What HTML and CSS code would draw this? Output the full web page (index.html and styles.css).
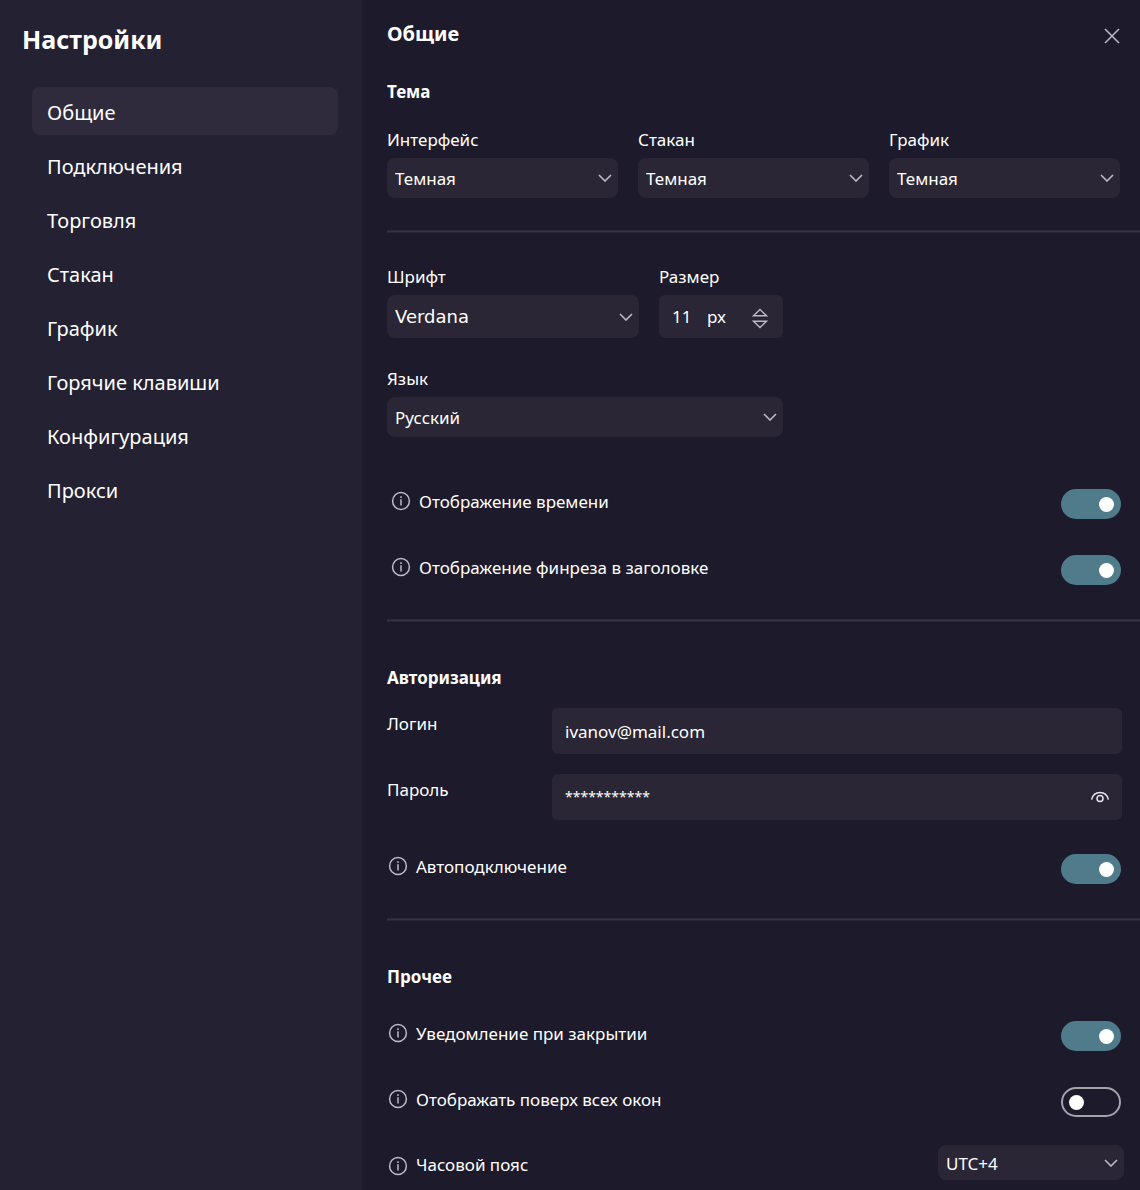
FILE: index.html
```html
<!DOCTYPE html>
<html lang="ru">
<head>
<meta charset="utf-8">
<meta name="viewport" content="width=device-width, initial-scale=1">
<title>Настройки</title>
<link rel="stylesheet" href="styles.css">
</head>
<body>
<svg class="sprite" aria-hidden="true">
  <symbol id="chevron" viewBox="0 0 14 8"><path d="M1 1l6 6 6-6"/></symbol>
  <symbol id="info" viewBox="0 0 20 20"><circle cx="10" cy="10" r="8.4"/><path d="M10 8.300v6.200M10 5.200v1.700"/></symbol>
</svg>
<div class="settings">
  <aside class="sidebar">
    <h1 class="sidebar-title">Настройки</h1>
    <nav class="nav">
      <a class="nav-link active" href="#general" aria-current="page">Общие</a>
      <a class="nav-link" href="#connections">Подключения</a>
      <a class="nav-link" href="#trading">Торговля</a>
      <a class="nav-link" href="#book">Стакан</a>
      <a class="nav-link" href="#chart">График</a>
      <a class="nav-link" href="#hotkeys">Горячие клавиши</a>
      <a class="nav-link" href="#config">Конфигурация</a>
      <a class="nav-link" href="#proxy">Прокси</a>
    </nav>
  </aside>

  <main class="content" id="general">
    <header class="header">
      <h2 class="title">Общие</h2>
      <button class="close" type="button" aria-label="Закрыть"><svg viewBox="0 0 16 16"><path d="M1 1l14 14M15 1L1 15"/></svg></button>
    </header>

    <section class="section theme">
      <h3 class="heading">Тема</h3>
      <div class="theme-grid">
        <div class="field">
          <label for="theme-ui">Интерфейс</label>
          <div class="select"><select id="theme-ui"><option>Темная</option></select><svg class="chevron"><use href="#chevron"/></svg></div>
        </div>
        <div class="field">
          <label for="theme-book">Стакан</label>
          <div class="select"><select id="theme-book"><option>Темная</option></select><svg class="chevron"><use href="#chevron"/></svg></div>
        </div>
        <div class="field">
          <label for="theme-chart">График</label>
          <div class="select"><select id="theme-chart"><option>Темная</option></select><svg class="chevron"><use href="#chevron"/></svg></div>
        </div>
      </div>
    </section>

    <section class="section display">
      <div class="fonts">
        <div class="font-row">
          <div class="field font-field">
            <label for="font">Шрифт</label>
            <div class="select tall"><select class="verdana" id="font"><option>Verdana</option></select><svg class="chevron"><use href="#chevron"/></svg></div>
          </div>
          <div class="field size-field">
            <label for="size">Размер</label>
            <div class="stepper">
              <input id="size" type="text" inputmode="numeric" value="11">
              <span class="unit">px</span>
              <span class="steps">
                <button type="button" aria-label="Увеличить"><svg viewBox="0 0 16 9"><path d="M1.500 7.800h13L8 1.500z"/></svg></button>
                <button type="button" aria-label="Уменьшить"><svg viewBox="0 0 16 9"><path d="M1.500 1.200h13L8 7.500z"/></svg></button>
              </span>
            </div>
          </div>
        </div>
        <div class="field">
          <label for="lang">Язык</label>
          <div class="select"><select id="lang"><option>Русский</option></select><svg class="chevron"><use href="#chevron"/></svg></div>
        </div>
      </div>
      <div class="rows inset">
        <div class="row">
          <svg class="info"><use href="#info"/></svg>
          <label for="show-time">Отображение времени</label>
          <input class="toggle" id="show-time" type="checkbox" checked>
        </div>
        <div class="row">
          <svg class="info"><use href="#info"/></svg>
          <label for="show-result">Отображение финреза в заголовке</label>
          <input class="toggle" id="show-result" type="checkbox" checked>
        </div>
      </div>
    </section>

    <section class="section auth">
      <h3 class="heading">Авторизация</h3>
      <div class="auth-grid">
        <label for="login">Логин</label>
        <div class="textbox"><input id="login" type="text" value="ivanov@mail.com"></div>
        <label for="password">Пароль</label>
        <div class="textbox">
          <input class="masked" id="password" type="text" value="***********">
          <button class="eye" type="button" aria-label="Показать пароль"><svg viewBox="0 0 20 12"><path d="M1.600 8.600C2.600 3.800 6 1.400 10 1.400s7.400 2.400 8.400 7.200"/><circle cx="10" cy="7.500" r="3"/></svg></button>
        </div>
      </div>
      <div class="row">
        <svg class="info"><use href="#info"/></svg>
        <label for="auto">Автоподключение</label>
        <input class="toggle" id="auto" type="checkbox" checked>
      </div>
    </section>

    <section class="section other">
      <h3 class="heading">Прочее</h3>
      <div class="rows">
        <div class="row">
          <svg class="info"><use href="#info"/></svg>
          <label for="notify">Уведомление при закрытии</label>
          <input class="toggle" id="notify" type="checkbox" checked>
        </div>
        <div class="row">
          <svg class="info"><use href="#info"/></svg>
          <label for="on-top">Отображать поверх всех окон</label>
          <input class="toggle" id="on-top" type="checkbox">
        </div>
      </div>
      <div class="row zone">
        <svg class="info"><use href="#info"/></svg>
        <label for="zone">Часовой пояс</label>
        <div class="select short"><select id="zone"><option>UTC+4</option></select><svg class="chevron"><use href="#chevron"/></svg></div>
      </div>
    </section>
  </main>
</div>
</body>
</html>
```
FILE: styles.css
```css
* {
  box-sizing: border-box;
}

body {
  margin: 0;
  background: #1d1a2b;
  color: #fff;
  font: 17px/24px "Noto Sans", "Open Sans", sans-serif;
}

h1, h2, h3 {
  margin: 0;
  font-weight: 700;
}

input, select, button {
  margin: 0;
  padding: 0;
  border: 0;
  background: none;
  color: inherit;
  font: inherit;
}

button {
  display: flex;
  cursor: pointer;
}

svg {
  fill: none;
  stroke: #bdbac8;
}

.sprite {
  position: absolute;
  width: 0;
  height: 0;
}

.settings {
  display: flex;
  min-height: 100vh;
}

/* Sidebar */
.sidebar {
  flex: 0 0 362px;
  padding: 21px 24px 24px 32px;
  background: #242133;
}

.sidebar-title {
  margin: 0 0 30px -10px;
  font-size: 25px;
  line-height: 36px;
}

.nav {
  display: flex;
  flex-direction: column;
  gap: 6px;
}

.nav-link {
  padding: 12px 15px 8px;
  border-radius: 8px;
  color: inherit;
  font-size: 20px;
  line-height: 28px;
  text-decoration: none;
}

.nav-link.active {
  background: #2f2b3d;
}

/* Content */
.content {
  flex: 1;
  min-width: 0;
  padding: 20px 0 10px 25px;
}

.header {
  display: flex;
  justify-content: space-between;
  margin-bottom: 32px;
  padding-right: 20px;
}

.title {
  font-size: 20px;
  line-height: 28px;
}

.close {
  align-self: flex-end;
  padding: 4px 0;
}

.close svg {
  width: 16px;
  height: 16px;
  stroke-width: 1.5;
}

.section {
  padding-right: 19px;
}

.section + .section {
  border-top: 3px solid transparent;
  background: linear-gradient(#2a2738 1px, #373445 1px 2px, #2a2738 2px) 0 0 / 100% 3px no-repeat border-box;
}

.heading {
  font-size: 17px;
}

.field {
  display: flex;
  flex-direction: column;
  gap: 6px;
}

.theme {
  padding-bottom: 32px;
}

.theme-grid {
  display: grid;
  grid-template-columns: repeat(3, 1fr);
  gap: 20px;
  margin-top: 24px;
  padding-right: 1px;
}

.select {
  display: grid;
  align-items: center;
  height: 40px;
  border-radius: 8px;
  background: #2a2636;
}

.select > * {
  grid-area: 1 / 1;
}

.select select {
  width: 100%;
  height: 100%;
  padding: 2px 28px 0 8px;
  appearance: none;
}

.select option {
  background: #2a2636;
}

.select .verdana {
  padding-top: 0;
  font-family: "DejaVu Sans", sans-serif;
  font-size: 18px;
}

.chevron {
  justify-self: end;
  width: 14px;
  height: 8px;
  margin-right: 6px;
  stroke-width: 1.6;
  pointer-events: none;
}

.tall {
  height: 43px;
}

.short {
  width: 186px;
  height: 35px;
}

.display {
  padding-top: 32px;
  padding-bottom: 34px;
}

.fonts {
  display: flex;
  flex-direction: column;
  gap: 29px;
  max-width: 396px;
}

.font-row {
  display: flex;
  gap: 20px;
}

.font-field {
  flex: 1;
}

.size-field {
  width: 124px;
}

.stepper {
  display: flex;
  align-items: center;
  height: 43px;
  padding: 0 15px 0 13px;
  border-radius: 6px;
  background: #2a2636;
}

.stepper input {
  width: 35px;
}

.steps {
  display: flex;
  flex-direction: column;
  gap: 3px;
  margin: 3px 0 0 auto;
}

.steps svg {
  width: 16px;
  height: 9px;
  stroke-width: 1.4;
}

.rows {
  display: flex;
  flex-direction: column;
  gap: 36px;
}

.inset {
  margin-top: 52px;
}

.row {
  display: flex;
  align-items: flex-start;
  padding-left: 1px;
}

.inset .row {
  padding-left: 4px;
}

.row label {
  flex: 1;
  padding-bottom: 2px;
  line-height: 26px;
}

.info {
  width: 20px;
  height: 20px;
  margin: 2px 8px 0 0;
  stroke-width: 1.5;
}

.toggle {
  display: flex;
  align-items: center;
  width: 60px;
  height: 30px;
  padding: 0 5px 0 6px;
  border: 2px solid #a5a3aa;
  border-radius: 15px;
  appearance: none;
  cursor: pointer;
}

.toggle::before {
  width: 15px;
  height: 15px;
  border-radius: 50%;
  background: #fff;
  content: "";
}

.toggle:checked {
  justify-content: flex-end;
  border-color: #507b8b;
  background: #507b8b;
}

.auth {
  padding-top: 44px;
  padding-bottom: 34px;
}

.auth-grid {
  display: grid;
  grid-template-columns: 165px 1fr;
  gap: 20px 0;
  margin: 18px -1px 34px 0;
}

.auth-grid label {
  padding-top: 4px;
}

.textbox {
  display: flex;
  align-items: center;
  height: 46px;
  padding: 0 12px 0 13px;
  border-radius: 6px;
  background: #2a2636;
}

.textbox input {
  flex: 1;
  min-width: 0;
  padding-top: 2px;
}

.textbox .masked {
  padding-top: 0;
  font-size: 14px;
}

.eye svg {
  width: 20px;
  height: 12px;
  stroke: #e6e5ea;
  stroke-width: 1.5;
}

.other {
  padding-top: 44px;
}

.other .rows {
  margin: 32px 0 28px;
}

.zone {
  align-items: flex-end;
  margin-right: -3px;
}

.zone .info {
  margin-bottom: 4px;
}
```
